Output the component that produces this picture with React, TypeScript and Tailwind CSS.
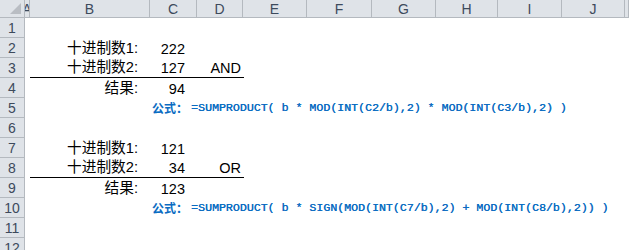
import React from "react";

const cols = ["A", "B", "C", "D", "E", "F", "G", "H", "I", "J", ""];

type Row = {
  b?: string;
  c?: string;
  d?: string;
  f?: string;
  line?: boolean;
};

const rows: Row[] = [
  {},
  { b: "十进制数1:", c: "222" },
  { b: "十进制数2:", c: "127", d: "AND", line: true },
  { b: "结果:", c: "94" },
  { f: "=SUMPRODUCT( b * MOD(INT(C2/b),2) * MOD(INT(C3/b),2) )" },
  {},
  { b: "十进制数1:", c: "121" },
  { b: "十进制数2:", c: "34", d: "OR", line: true },
  { b: "结果:", c: "123" },
  { f: "=SUMPRODUCT( b * SIGN(MOD(INT(C7/b),2) + MOD(INT(C8/b),2)) )" },
  {},
  {},
];

const grid =
  "grid grid-cols-[25px_5px_120px_47px_46px_64px_65px_64px_62px_64px_63px_1fr]";

const App = () => {
  return (
    <div className="h-[250px] w-[629px] overflow-hidden bg-white font-['Liberation_Sans','Noto_Sans_CJK_SC',sans-serif] text-[14px] text-black">
      <div className={`${grid} h-[18px]`}>
        <div className="flex items-end justify-end border-r border-b border-[#b4b9bf] bg-[#dfe3e8] pr-[3px] pb-[3px]">
          <svg width="11" height="11" viewBox="0 0 11 11">
            <polygon points="11,0 11,11 0,11" fill="#b9bdc3" />
          </svg>
        </div>
        {cols.map((c, i) => (
          <div
            key={i}
            className="flex items-center justify-center overflow-hidden border-r border-b border-[#b4b9bf] bg-[#dfe3e8] text-[14px] leading-none text-[#3d4a5c]"
          >
            {c}
          </div>
        ))}
      </div>
      {rows.map((r, i) => (
        <div key={i} className={`${grid} h-[20px]`}>
          <div className="flex items-center justify-center border-r border-b border-[#b4b9bf] bg-[#dfe3e8] text-[14px] leading-none text-[#3d4a5c]">
            {i + 1}
          </div>
          <div />
          <div
            className={`flex items-end justify-end pr-[12px] pb-[2px] text-[14.7px] leading-none whitespace-nowrap ${r.line ? "border-b border-black" : ""}`}
          >
            {r.b}
          </div>
          <div
            className={`relative flex items-end justify-end pr-[12px] pb-[2px] text-[14.5px] leading-none whitespace-nowrap ${r.line ? "border-b border-black" : ""}`}
          >
            {r.c}
            {r.f && (
              <div className="absolute top-0 left-[2px] flex h-full items-center whitespace-nowrap text-[#0a6cc2]">
                <span className="font-['Noto_Sans_CJK_SC',sans-serif] text-[12px] font-bold">公式：</span>
                <span className="ml-[3px] font-['Liberation_Mono',monospace] text-[11.6px] [text-shadow:0.3px_0_0_#0a6cc2]">
                  {r.f}
                </span>
              </div>
            )}
          </div>
          <div
            className={`mr-[-1px] flex items-end justify-end pr-[3px] pb-[2px] text-[14.5px] leading-none ${r.line ? "border-b border-black" : ""}`}
          >
            {r.d}
          </div>
        </div>
      ))}
    </div>
  );
};

export default App;
